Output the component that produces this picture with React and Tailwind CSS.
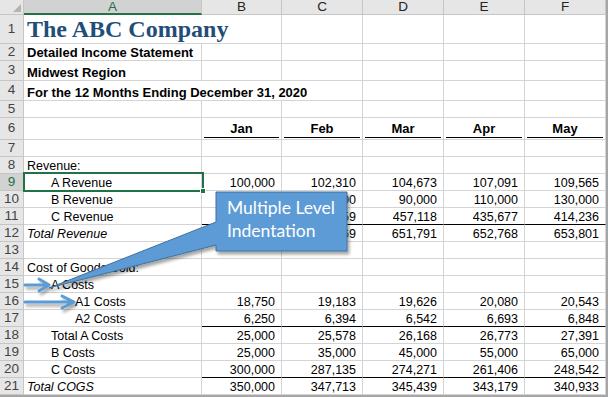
import React from 'react';

const COLS = ['B', 'C', 'D', 'E', 'F'];
const COL_W = ['w-[80px]', 'w-[81px]', 'w-[81px]', 'w-[81px]', 'w-[81px]'];

const ROWS = [
    { n: 1, h: 'h-[29px]', label: 'The ABC Company', kind: 'title', hide: 1 },
    { n: 2, h: 'h-[17px]', label: 'Detailed Income Statement', kind: 'bold' },
    { n: 3, h: 'h-[20px]', label: 'Midwest Region', kind: 'bold' },
    { n: 4, h: 'h-[20px]', label: 'For the 12 Months Ending December 31, 2020', kind: 'bold', hide: 2 },
    { n: 5, h: 'h-[17px]' },
    { n: 6, h: 'h-[22px]', months: ['Jan', 'Feb', 'Mar', 'Apr', 'May'] },
    { n: 7, h: 'h-[17px]' },
    { n: 8, h: 'h-[17px]', label: 'Revenue:' },
    { n: 9, h: 'h-[17px]', label: 'A Revenue', indent: 1, values: ['100,000', '102,310', '104,673', '107,091', '109,565'], selected: true },
    { n: 10, h: 'h-[17px]', label: 'B Revenue', indent: 1, values: ['50,000', '70,000', '90,000', '110,000', '130,000'] },
    { n: 11, h: 'h-[17px]', label: 'C Revenue', indent: 1, values: ['500,000', '478,559', '457,118', '435,677', '414,236'], rule: true },
    { n: 12, h: 'h-[17px]', label: 'Total Revenue', kind: 'italic', values: ['650,000', '650,869', '651,791', '652,768', '653,801'] },
    { n: 13, h: 'h-[17px]' },
    { n: 14, h: 'h-[17px]', label: 'Cost of Goods Sold:' },
    { n: 15, h: 'h-[17px]', label: 'A Costs', indent: 1 },
    { n: 16, h: 'h-[17px]', label: 'A1 Costs', indent: 2, values: ['18,750', '19,183', '19,626', '20,080', '20,543'] },
    { n: 17, h: 'h-[17px]', label: 'A2 Costs', indent: 2, values: ['6,250', '6,394', '6,542', '6,693', '6,848'], rule: true },
    { n: 18, h: 'h-[17px]', label: 'Total A Costs', indent: 1, values: ['25,000', '25,578', '26,168', '26,773', '27,391'] },
    { n: 19, h: 'h-[17px]', label: 'B Costs', indent: 1, values: ['25,000', '35,000', '45,000', '55,000', '65,000'] },
    { n: 20, h: 'h-[17px]', label: 'C Costs', indent: 1, values: ['300,000', '287,135', '274,271', '261,406', '248,542'], rule: true },
    { n: 21, h: 'h-[17px]', label: 'Total COGS', kind: 'italic', values: ['350,000', '347,713', '345,439', '343,179', '340,933'] },
];

const INDENT = ['pl-[3px]', 'pl-[27px]', 'pl-[51px]'];

const labelClass = (kind) => {
    if (kind === 'title') return "font-['Liberation_Serif',serif] font-bold text-[24px] leading-[24px] text-[#1f4e79] pb-[2px]";
    if (kind === 'bold') return 'font-bold text-[13px] leading-[14px]';
    if (kind === 'italic') return 'italic text-[12.5px] leading-[14px]';
    return 'text-[12.5px] leading-[14px]';
};

const Row = ({ row }) => {
    const hide = row.hide || 0;
    return (
        <div className={`flex ${row.h}`}>
            <div className={`w-[24px] shrink-0 flex items-center justify-center border-r border-b border-[#c6c6c6] text-[13.5px] ${row.selected ? 'bg-[#d2d2d2] text-[#217346]' : 'bg-[#e6e6e6] text-[#444]'}`}>
                {row.n}
            </div>
            <div className={`w-[178px] shrink-0 flex items-end whitespace-nowrap border-b border-[#d4d4d4] ${hide > 0 ? '' : 'border-r'} ${INDENT[row.indent || 0]}`}>
                {row.label && <span className={labelClass(row.kind)}>{row.label}</span>}
            </div>
            {COLS.map((c, i) => {
                const noRight = i < hide - 1;
                return (
                    <div
                        key={c}
                        className={`${COL_W[i]} shrink-0 flex items-end justify-end border-b ${row.rule ? 'border-b-black' : 'border-b-[#d4d4d4]'} ${noRight ? '' : 'border-r border-r-[#d4d4d4]'}`}
                    >
                        {row.months && (
                            <div className="flex-1 mx-[2px] mb-[1px] pb-[1px] border-b border-black text-center font-bold text-[13px] leading-[14px]">
                                {row.months[i]}
                            </div>
                        )}
                        {row.values && (
                            <span className="pr-[6px] text-[12.5px] leading-[14px]">{row.values[i]}</span>
                        )}
                    </div>
                );
            })}
        </div>
    );
};

const Overlay = () => (
    <svg className="absolute left-0 top-0 pointer-events-none" width="608" height="397" viewBox="0 0 608 397">
        <defs>
            <filter id="sh" x="-10%" y="-10%" width="130%" height="140%">
                <feDropShadow dx="2" dy="3" stdDeviation="1.6" floodColor="#000" floodOpacity="0.35" />
            </filter>
        </defs>
        {/* level arrows */}
        <g filter="url(#sh)" stroke="#5b9bd5" strokeWidth="3" fill="none" strokeLinecap="round" strokeLinejoin="round">
            <path d="M25 285 H49 M39 279 L49 285 L39 291" />
            <path d="M25 302 H74 M62 296 L74 302 L62 308" />
        </g>
        {/* callout box with pointer */}
        <path
            d="M216 192 H347 V251 H216 V245 L49 288 L216 222 Z"
            fill="#5b9bd5"
            stroke="#41719c"
            strokeWidth="1"
            filter="url(#sh)"
        />
    </svg>
);

export default function App() {
    return (
        <div className="relative w-[608px] h-[397px] overflow-hidden bg-white text-black font-['Liberation_Sans',Arial,sans-serif]">
            <div className="w-[608px] border-r-2 border-b-2 border-[#a6a6a6]">
                {/* column headers */}
                <div className="flex h-[15px] text-[13.5px] leading-[13px]">
                    <div className="w-[24px] shrink-0 bg-[#e6e6e6] border-r border-b border-[#c6c6c6] flex items-end justify-end pr-[2px] pb-[2px]">
                        <svg width="8" height="8" viewBox="0 0 8 8"><path d="M8 0 V8 H0 Z" fill="#b4b4b4" /></svg>
                    </div>
                    <div className="w-[178px] shrink-0 bg-[#d2d2d2] text-[#217346] border-r border-[#c6c6c6] border-b-2 border-b-[#217346] text-center">
                        A
                    </div>
                    {COLS.map((c, i) => (
                        <div key={c} className={`${COL_W[i]} shrink-0 bg-[#e6e6e6] text-[#222] border-r border-b border-[#c6c6c6] text-center`}>
                            {c}
                        </div>
                    ))}
                </div>
                {ROWS.map((r) => <Row key={r.n} row={r} />)}
            </div>

            {/* selected cell A9 */}
            <div className="absolute left-[23px] top-[172px] w-[181px] h-[20px] border-2 border-[#217346]" />
            <div className="absolute left-[200px] top-[188px] w-[6px] h-[6px] bg-[#217346] border border-white" />

            <Overlay />

            <div className="absolute left-[216px] top-[192px] w-[131px] h-[59px] pl-[11px] pt-[4px] text-white text-[17.5px] leading-[23px] font-['Lato','Open_Sans',sans-serif]">
                <div>Multiple Level</div>
                <div>Indentation</div>
            </div>
        </div>
    );
}
